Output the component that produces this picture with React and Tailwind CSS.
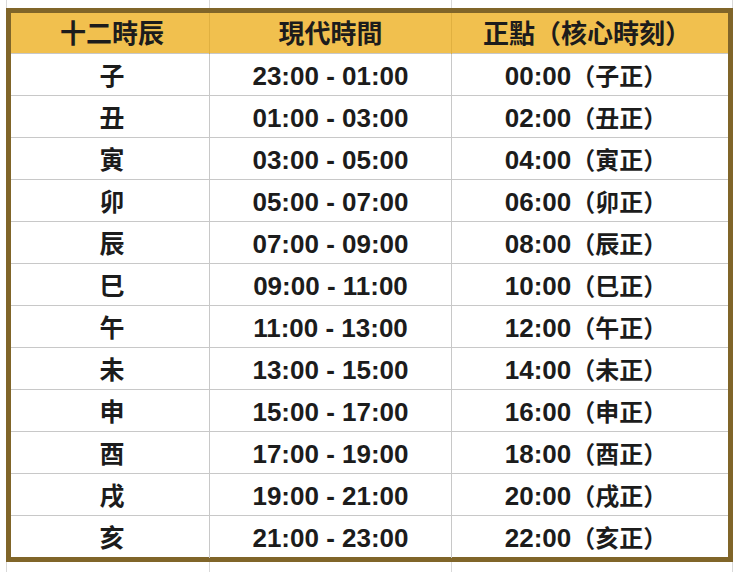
import React from "react";

const branches = ["子","丑","寅","卯","辰","巳","午","未","申","酉","戌","亥"];
const pad = (n) => String(n).padStart(2, "0");

const rows = branches.map((b, i) => {
  const start = (23 + i * 2) % 24;
  const end = (start + 2) % 24;
  const core = (i * 2) % 24;
  return { b, range: `${pad(start)}:00 - ${pad(end)}:00`, core: `${pad(core)}:00` };
});

const font = { fontFamily: '"Liberation Sans", "Noto Sans CJK TC", sans-serif' };

function Strip({ h }) {
  return (
    <div className={`grid grid-cols-[7px_203px_242px_281px_1fr] ${h}`}>
      <div className="border-r border-[#d9d9d9]" />
      <div className="border-r border-[#d9d9d9]" />
      <div className="border-r border-[#d9d9d9]" />
      <div className="border-r border-[#d9d9d9]" />
      <div />
    </div>
  );
}

export default function App() {
  return (
    <div className="w-[740px] h-[572px] bg-white overflow-hidden flex flex-col" style={font}>
      <Strip h="h-[8px] shrink-0" />
      <div className="ml-[6px] w-[727px] border-[5px] border-[#806529] shrink-0">
        <div className="grid grid-cols-[198px_242px_277px] h-[40px] bg-[#f1c04e] font-bold text-[26px] text-[#1c1c1c]">
          <div className="flex items-center justify-center pt-[2px] pl-[4px]">十二時辰</div>
          <div className="flex items-center justify-center pt-[2px] border-l border-[#e0b040]">現代時間</div>
          <div className="flex items-center justify-center pt-[2px] border-l border-[#e0b040] pr-[6px]">正點（核心時刻）</div>
        </div>
        {rows.map((r) => (
          <div key={r.b} className="grid grid-cols-[198px_242px_277px] h-[42px] border-t border-[#c8c8c8] font-bold text-[#1c1c1c]">
            <div className="flex items-center justify-center pt-[3px] text-[25px] pl-[4px]">{r.b}</div>
            <div className="flex items-center justify-center pt-[3px] border-l border-[#c8c8c8] text-[26px] whitespace-pre">{r.range}</div>
            <div className="flex items-center justify-center pt-[3px] border-l border-[#c8c8c8] pr-[8px]">
              <span className="text-[26px]">{r.core}</span>
              <span className="text-[24px]">（{r.b}正）</span>
            </div>
          </div>
        ))}
      </div>
      <Strip h="flex-1" />
    </div>
  );
}
